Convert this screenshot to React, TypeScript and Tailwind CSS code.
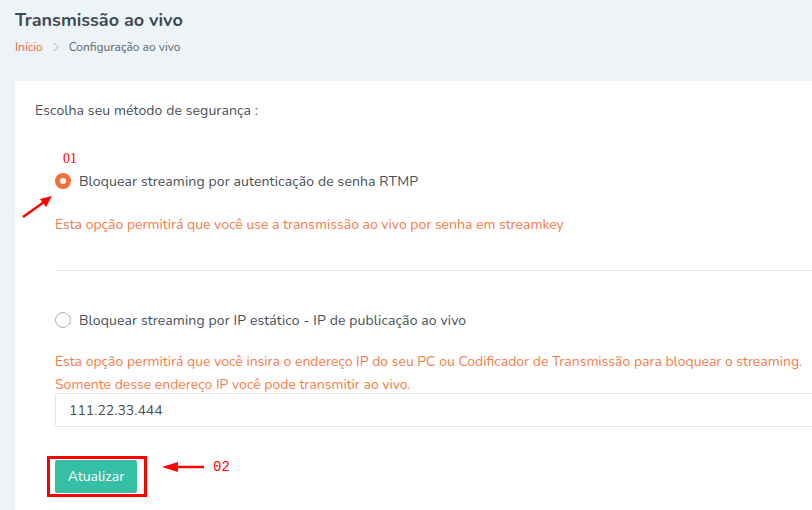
import React from "react";

export default function App() {
  const font = { fontFamily: '"Nunito", "Noto Sans", Lato, sans-serif' };
  return (
    <div className="relative w-[812px] h-[510px] overflow-hidden bg-[#edf3f7]" style={font}>
      <div className="pl-[15px] pt-[8px]">
        <h1 className="text-[18px] leading-[24px] font-bold text-[#3d4a59]">Transmissão ao vivo</h1>
        <div className="mt-[6px] flex items-center text-[12px] leading-[18px]">
          <span className="text-[#f0693f]">Início</span>
          <svg className="mx-[8px]" width="10" height="12" viewBox="0 0 10 12">
            <path d="M3 2 L7 6 L3 10" fill="none" stroke="#c5ccd3" strokeWidth="1.2" />
          </svg>
          <span className="text-[#5b6570]">Configuração ao vivo</span>
        </div>
      </div>
      <div className="ml-[15px] mt-[25px] w-[820px] h-[440px] bg-white pl-[20px] pt-[20px]">
        <p className="text-[14px] leading-[20px] text-[#474f57] tracking-[0.1px]">Escolha seu método de segurança :</p>
        <div className="pl-[20px]">
          <div className="mt-[31px] pl-[8px] text-[14px] leading-[14px] text-[#ff0000]" style={{ fontFamily: '"Liberation Serif", serif' }}>01</div>
          <label className="mt-[5px] flex items-center gap-[8px] h-[20px]">
            <span className="w-[16px] h-[16px] rounded-full bg-[#f2703a] flex items-center justify-center">
              <span className="w-[6px] h-[6px] rounded-full bg-white" />
            </span>
            <span className="text-[14px] text-[#474f57] tracking-[0.12px]">Bloquear streaming por autenticação de senha RTMP</span>
          </label>
          <p className="mt-[24px] text-[14px] leading-[20px] text-[#f57b4b]">Esta opção permitirá que você use a transmissão ao vivo por senha em streamkey</p>
          <div className="mt-[35px] h-px bg-[#e3e6e9]" />
          <label className="mt-[39px] flex items-center gap-[8px] h-[20px]">
            <span className="w-[16px] h-[16px] rounded-full border border-[#a9b0b7] bg-white" />
            <span className="text-[14px] text-[#474f57] tracking-[0.12px]">Bloquear streaming por IP estático - IP de publicação ao vivo</span>
          </label>
          <p className="mt-[20px] text-[14px] leading-[23px] text-[#f57b4b]">
            Esta opção permitirá que você insira o endereço IP do seu PC ou Codificador de Transmissão para bloquear o streaming.
            <br />
            Somente desse endereço IP você pode transmitir ao vivo.
          </p>
          <div className="mt-[-3px] h-[34px] border border-[#e3e6e9] rounded-[2px] flex items-center pl-[13px] text-[14px] text-[#474f57]">
            111.22.33.444
          </div>
          <button className="mt-[33px] w-[82px] h-[33px] rounded-[2px] bg-[#36bfa5] text-white text-[14px]">Atualizar</button>
        </div>
      </div>
      {/* annotations */}
      <div className="absolute left-[47px] top-[456px] w-[100px] h-[41px] border-[3px] border-[#ff0000]" />
      <svg className="absolute left-0 top-0" width="812" height="510">
        <line x1="23" y1="217" x2="44" y2="202" stroke="#ff0000" strokeWidth="2.5" />
        <polygon points="52,196 40,199 46,207" fill="#ff0000" />
        <line x1="176" y1="467" x2="204" y2="467" stroke="#ff0000" strokeWidth="2.5" />
        <polygon points="162,467 178,462 178,472" fill="#ff0000" />
      </svg>
      <div className="absolute left-[213px] top-[459px] text-[14px] leading-[16px] text-[#ff0000]" style={{ fontFamily: '"Liberation Mono", monospace' }}>02</div>
    </div>
  );
}
